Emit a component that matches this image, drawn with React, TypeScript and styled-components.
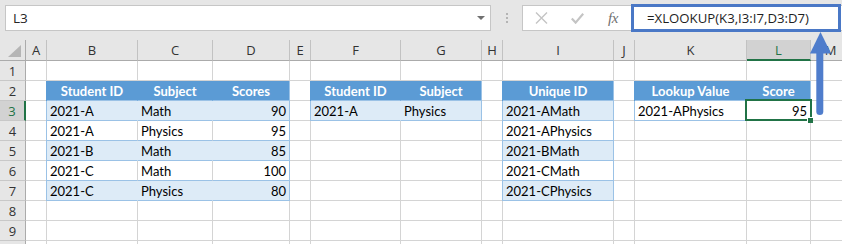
import React from 'react';
import styled, { createGlobalStyle, css } from 'styled-components';

const GlobalStyle = createGlobalStyle`
  html, body { margin: 0; padding: 0; background: #ffffff; }
  body { overflow: hidden; }
`;

const COL_WIDTHS = [26, 21, 91, 75, 77, 21, 90, 81, 21, 111, 21, 112, 64, 40];
const LETTERS = ['A', 'B', 'C', 'D', 'E', 'F', 'G', 'H', 'I', 'J', 'K', 'L', 'M'];
const ROW_COUNT = 10;
const VISIBLE_LABELS = 9;

const GRID = '#d4d4d4';
const TBL_BORDER = '#9bc2e6';
const TBL_HEAD = '#5b9bd5';
const TBL_BAND = '#ddebf7';
const XL_GREEN = '#217346';

type Kind = 'empty' | 'head' | 'band' | 'plain';
type Align = 'left' | 'right' | 'center';
type Spec = { text?: string; kind: Kind; align: Align; first?: boolean; last?: boolean; selected?: boolean };

const cells: Record<string, Spec> = {};

function addTable(
  cols: string[],
  header: string[],
  body: string[][],
  banded: boolean,
  rightCols: string[] = [],
) {
  cols.forEach((c, i) => {
    cells[`${c}2`] = { text: header[i], kind: 'head', align: 'center', first: i === 0, last: i === cols.length - 1 };
  });
  body.forEach((row, r) => {
    cols.forEach((c, i) => {
      cells[`${c}${r + 3}`] = {
        text: row[i],
        kind: banded && r % 2 === 0 ? 'band' : 'plain',
        align: rightCols.includes(c) ? 'right' : 'left',
        first: i === 0,
        last: i === cols.length - 1,
      };
    });
  });
}

addTable(
  ['B', 'C', 'D'],
  ['Student ID', 'Subject', 'Scores'],
  [
    ['2021-A', 'Math', '90'],
    ['2021-A', 'Physics', '95'],
    ['2021-B', 'Math', '85'],
    ['2021-C', 'Math', '100'],
    ['2021-C', 'Physics', '80'],
  ],
  true,
  ['D'],
);
addTable(['F', 'G'], ['Student ID', 'Subject'], [['2021-A', 'Physics']], true);
addTable(
  ['I'],
  ['Unique ID'],
  [['2021-AMath'], ['2021-APhysics'], ['2021-BMath'], ['2021-CMath'], ['2021-CPhysics']],
  true,
);
addTable(['K', 'L'], ['Lookup Value', 'Score'], [['2021-APhysics', '95']], false, ['L']);
cells['L3'] = { ...cells['L3'], selected: true };

const ACTIVE_COL = 'L';
const ACTIVE_ROW = 3;

/* ---------- layout ---------- */

const Window = styled.div`
  position: relative;
  width: 842px;
  height: 244px;
  overflow: hidden;
  background: #e6e6e6;
  font-family: 'Open Sans', 'Noto Sans', sans-serif;
`;

const FormulaBar = styled.div`
  display: flex;
  align-items: flex-start;
  height: 40px;
  padding: 5px 0 0 5px;
  box-sizing: border-box;
`;

const NameBox = styled.div`
  flex: 0 0 486px;
  height: 26px;
  box-sizing: border-box;
  background: #ffffff;
  border: 1px solid #c6c6c6;
  display: flex;
  align-items: center;
  justify-content: space-between;
  padding: 0 5px 0 7px;
  font-size: 13.5px;
  color: #262626;
`;

const DropArrow = styled.span`
  width: 0;
  height: 0;
  border-left: 4px solid transparent;
  border-right: 4px solid transparent;
  border-top: 4px solid #707070;
`;

const Grip = styled.div`
  flex: 0 0 31px;
  height: 26px;
  display: flex;
  flex-direction: column;
  align-items: center;
  justify-content: center;
  gap: 2px;
`;

const GripDot = styled.span`
  width: 2px;
  height: 2px;
  background: #b4b4b4;
`;

const FormulaInput = styled.div`
  position: relative;
  flex: 1 0 auto;
  margin-right: -6px;
  height: 26px;
  box-sizing: border-box;
  background: #ffffff;
  border: 1px solid #c6c6c6;
  display: flex;
  align-items: center;
`;

const IconArea = styled.div`
  flex: 0 0 108px;
  height: 100%;
  display: flex;
  align-items: center;
`;

const IconSlot = styled.span<{ $dark?: boolean }>`
  flex: 0 0 36px;
  display: flex;
  align-items: center;
  justify-content: center;
  color: ${(p) => (p.$dark ? '#6f6f6f' : '#c4c4c4')};
`;

const FxLabel = styled.span`
  font-family: 'Liberation Serif', 'DejaVu Serif', serif;
  font-style: italic;
  font-size: 15px;
  letter-spacing: -0.5px;
  color: #6f6f6f;
  line-height: 1;
`;

const FormulaText = styled.span`
  padding-left: 16px;
  font-family: 'Open Sans', 'Noto Sans', sans-serif;
  font-size: 13.2px;
  color: #1e1e1e;
  white-space: nowrap;
`;

const Highlight = styled.div`
  position: absolute;
  left: 108px;
  top: -2px;
  width: 210px;
  height: 28px;
  box-sizing: border-box;
  border: 3px solid #4a78c6;
  pointer-events: none;
`;

const Sheet = styled.div`
  display: grid;
  grid-template-columns: ${COL_WIDTHS.map((w) => `${w}px`).join(' ')};
  grid-template-rows: 21px repeat(${ROW_COUNT}, 20px);
  background: #ffffff;
  font-family: Lato, 'Liberation Sans', sans-serif;
  font-size: 13px;
`;

const headerText = css`
  font-family: 'Open Sans', 'Noto Sans', sans-serif;
  font-size: 13px;
  display: flex;
  align-items: center;
  justify-content: center;
  box-sizing: border-box;
`;

const Corner = styled.div`
  ${headerText};
  position: relative;
  background: #e6e6e6;
  border-right: 1px solid #ababab;
  border-bottom: 1px solid #ababab;
`;

const CornerTriangle = styled.span`
  position: absolute;
  right: 4px;
  bottom: 3px;
  width: 0;
  height: 0;
  border-left: 13px solid transparent;
  border-bottom: 12px solid #b5b5b5;
`;

const ColHead = styled.div<{ $active?: boolean }>`
  ${headerText};
  padding-top: ${(p) => (p.$active ? '1px' : '0')};
  background: ${(p) => (p.$active ? '#d2d2d2' : '#e6e6e6')};
  color: ${(p) => (p.$active ? XL_GREEN : '#333333')};
  border-right: 1px solid #c2c2c2;
  border-bottom: ${(p) => (p.$active ? `2px solid ${XL_GREEN}` : '1px solid #ababab')};
`;

const RowHead = styled.div<{ $active?: boolean }>`
  ${headerText};
  background: ${(p) => (p.$active ? '#d2d2d2' : '#e6e6e6')};
  color: ${(p) => (p.$active ? XL_GREEN : '#333333')};
  border-right: ${(p) => (p.$active ? `2px solid ${XL_GREEN}` : '1px solid #ababab')};
  border-bottom: 1px solid #c8c8c8;
`;

const fills: Record<Kind, string> = {
  empty: '#ffffff',
  head: TBL_HEAD,
  band: TBL_BAND,
  plain: '#ffffff',
};

const Cell = styled.div<{
  $kind: Kind;
  $align: Align;
  $first?: boolean;
  $last?: boolean;
  $selected?: boolean;
}>`
  box-sizing: border-box;
  position: relative;
  padding: 2px 3px 0 3px;
  line-height: 17px;
  white-space: nowrap;
  text-align: ${(p) => p.$align};
  background: ${(p) => fills[p.$kind]};
  color: ${(p) => (p.$kind === 'head' ? '#ffffff' : '#000000')};
  font-weight: ${(p) => (p.$kind === 'head' ? 700 : 400)};
  border-right: 1px solid
    ${(p) => {
      if (p.$kind === 'empty') return GRID;
      if (p.$last) return TBL_BORDER;
      if (p.$kind === 'head') return TBL_HEAD;
      if (p.$kind === 'band') return TBL_BAND;
      return GRID;
    }};
  border-bottom: 1px solid ${(p) => (p.$kind === 'empty' ? GRID : TBL_BORDER)};
  box-shadow: ${(p) =>
    p.$first ? `-1px 0 0 ${p.$kind === 'head' ? TBL_HEAD : TBL_BORDER}` : 'none'};
  ${(p) =>
    p.$selected &&
    css`
      z-index: 2;
      &::after {
        content: '';
        position: absolute;
        left: -2px;
        top: -2px;
        right: -2px;
        bottom: -1px;
        border: 2px solid ${XL_GREEN};
      }
      &::before {
        content: '';
        position: absolute;
        right: -3px;
        bottom: -3px;
        width: 5px;
        height: 5px;
        background: ${XL_GREEN};
        box-shadow: -1px -1px 0 #ffffff;
        z-index: 1;
      }
    `}
`;

const ArrowOverlay = styled.svg`
  position: absolute;
  left: 808px;
  top: 30px;
  z-index: 5;
  pointer-events: none;
`;

const ARROW_BLUE = '#4f7dcc';

export default function App() {
  return (
    <>
      <GlobalStyle />
      <Window>
        <FormulaBar>
          <NameBox>
            <span>L3</span>
            <DropArrow />
          </NameBox>
          <Grip>
            <GripDot />
            <GripDot />
            <GripDot />
          </Grip>
          <FormulaInput>
            <IconArea>
              <IconSlot>
                <svg width="13" height="12" viewBox="0 0 13 12">
                  <path d="M1 0.5 L12 11.5 M12 0.5 L1 11.5" stroke="currentColor" strokeWidth="1.4" fill="none" />
                </svg>
              </IconSlot>
              <IconSlot>
                <svg width="13" height="11" viewBox="0 0 13 11">
                  <path d="M0.8 5.6 L4.6 9.6 L12.2 0.8" stroke="currentColor" strokeWidth="2.2" fill="none" />
                </svg>
              </IconSlot>
              <IconSlot $dark>
                <FxLabel>fx</FxLabel>
              </IconSlot>
            </IconArea>
            <FormulaText>=XLOOKUP(K3,I3:I7,D3:D7)</FormulaText>
            <Highlight />
          </FormulaInput>
        </FormulaBar>

        <Sheet>
          <Corner>
            <CornerTriangle />
          </Corner>
          {LETTERS.map((l) => (
            <ColHead key={l} $active={l === ACTIVE_COL}>
              {l}
            </ColHead>
          ))}
          {Array.from({ length: ROW_COUNT }, (_, i) => i + 1).map((r) => (
            <React.Fragment key={r}>
              <RowHead $active={r === ACTIVE_ROW}>{r <= VISIBLE_LABELS ? r : null}</RowHead>
              {LETTERS.map((l) => {
                const spec = cells[`${l}${r}`] ?? { kind: 'empty' as Kind, align: 'left' as Align };
                return (
                  <Cell
                    key={l}
                    $kind={spec.kind}
                    $align={spec.align}
                    $first={spec.first}
                    $last={spec.last}
                    $selected={spec.selected}
                  >
                    {spec.text}
                  </Cell>
                );
              })}
            </React.Fragment>
          ))}
        </Sheet>

        <ArrowOverlay width="26" height="90" viewBox="0 0 26 90">
          <path d="M12.5 2 L23 23.5 L2 23.5 Z" fill={ARROW_BLUE} />
          <line x1="11.8" y1="20" x2="11.8" y2="81.5" stroke={ARROW_BLUE} strokeWidth="7" strokeLinecap="round" />
        </ArrowOverlay>
      </Window>
    </>
  );
}
